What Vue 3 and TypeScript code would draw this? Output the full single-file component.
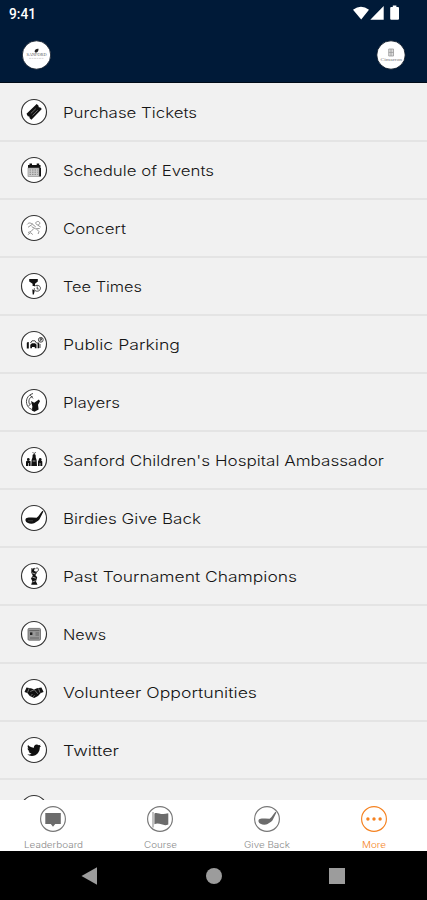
<script setup lang="ts">
interface MenuItem { label: string; icon: string; width: number }
interface Tab { label: string; icon: string; width: number; active?: boolean }

const items: MenuItem[] = [
  { label: 'Purchase Tickets', icon: 'ticket', width: 134 },
  { label: 'Schedule of Events', icon: 'calendar', width: 151 },
  { label: 'Concert', icon: 'concert', width: 63 },
  { label: 'Tee Times', icon: 'tee', width: 79 },
  { label: 'Public Parking', icon: 'parking', width: 117 },
  { label: 'Players', icon: 'players', width: 57 },
  { label: "Sanford Children's Hospital Ambassador", icon: 'children', width: 321 },
  { label: 'Birdies Give Back', icon: 'club', width: 138 },
  { label: 'Past Tournament Champions', icon: 'trophy', width: 234 },
  { label: 'News', icon: 'news', width: 43 },
  { label: 'Volunteer Opportunities', icon: 'hands', width: 194 },
  { label: 'Twitter', icon: 'twitter', width: 56 },
  { label: '', icon: 'none', width: 0 },
]

const tabs: Tab[] = [
  { label: 'Leaderboard', icon: 'board', width: 59 },
  { label: 'Course', icon: 'flag', width: 33 },
  { label: 'Give Back', icon: 'club', width: 46 },
  { label: 'More', icon: 'more', width: 24, active: true },
]

// Filled shapes, drawn on a 28-unit canvas centred on 14,14
const solid: Record<string, string> = {
  ticket: 'M6.5 15.8 16.7 6 18.4 7.6 18.8 9.2 20.4 9.6 21.8 11 11.4 21.7 9.7 20.2 9.3 18.6 7.8 18.2Z',
  calendar: 'M8 9H20.5V13H8ZM9.5 7.5H12V10H9.5ZM16.7 7.5H19.2V10H16.7ZM18.8 12H21V20.5H19Z',
  tee: 'M9.2 6.9H17.8V9.6L15 11.8V14H12.6V11.7L9.2 9.5ZM12.3 17.3 14.8 18.5 13.8 22.5H12.7Z',
  parking: 'M6.8 12.8H8.8V18.4H6.8ZM10.3 14.8 12 13.2H15L16.5 14.6V18.2H14.8V17H12V18.2H10.3ZM17.6 13H19.2V18.2H17.6Z',
  players: 'M11 13 14.2 14.8 18.9 11.4 20 13.2 18 16.7 18.6 21.5 14.5 23.7 11.8 22.6 12.4 18.5Z',
  children: 'M6 15.4 8 13.9 10.6 15.3V20H6ZM11.6 14 13 9.8H15.2L16.6 14 17 20H11.3ZM18 14.8 20.4 13.6 22.3 15.5V20H18Z',
  club: 'M5.9 14.4C7.4 13.2 10 13.4 12 13.5L16.6 13.7 18.3 12.2 22.4 6.8 23.4 7.5 20.3 13.8C19.4 16.4 17.2 17.2 14.6 18.9 12.8 20 9.5 19.9 7.5 18.8 5.4 17.6 5 15.8 5.9 14.4Z',
  trophy: 'M11.4 7 15 5.8 14 8.7 17 10.5 15.4 13.2 17.2 15.2 16 19.5 17.5 22.8H11.2L12.3 19 11 16.5 12.8 13.6 11.3 10.8Z',
  hands: 'M4.5 14 6.5 9.5 11.7 10.5 14 11.5 17 10.2 21.4 9.5 23.6 14 20.8 15 18 18 14.2 20 9.8 18 7.3 15Z',
  twitter: 'M8 9.1C9.8 11 12 11.6 14 11.8 13.6 9.8 15 8.5 16.7 8.5 17.6 8.5 18.3 8.8 18.8 9.3L20.6 8.7 19.7 10.1 21.1 9.9 19.8 11.3C20 15.5 17.1 20 11.9 20 10.1 20 8.5 19.5 7.2 18.6 9.1 18.7 10.5 18.2 11.6 17.4 9.9 17.3 9 16.4 8.6 15.3L9.7 15.2C8.3 14.8 7.6 13.7 7.6 12.3L8.7 12.6C7.6 11.8 7.3 10.3 8 9.1Z',
  board: 'M6.3 8H21.8V19H16.2L14 21.8 11.8 19H6.3Z',
  flag: 'M8.4 8.4C11.5 6.6 14 10.5 22.3 8.3V19.4C17.2 22 13.8 16.7 8.4 19.2Z',
}

// Thin secondary strokes
const line: Record<string, string> = {
  concert: 'M7.3 10.4C9 7.8 11 9.4 12.7 10M8 13.3 12.5 10.2 15.8 13M15.8 8.7C17 6.5 20.4 7.4 19.7 9.9 18.3 11.8 15.7 10.9 15.8 8.7M17.8 11.2 20.8 13.1M11.7 12.7 15.6 14.8 19.7 14.5M13.8 14.5 11 17.5 8 18.5M16.7 15.2 19 17.6 18.1 20M7.8 20.7 10.7 18.7 12.8 20.6',
  tee: 'M14.5 14.2C17.8 11.8 21.8 14.6 20 17.8 17.6 20.8 13.2 18.4 14.4 16.2M17.2 14.4V17H18.7',
  parking: 'M7 12.6H9M10.5 13 12 10.8H15L16.5 13H19M20 14V18M18.4 9.8A2.4 2.4 0 1 0 23.2 9.8A2.4 2.4 0 1 0 18.4 9.8M20.2 11.4V8.6H21.6V10H20.5',
  players: 'M13 5.5C7.2 7.2 5.2 12.5 7.2 17.2 8.3 19.8 10.7 21.2 13 21.8M12.5 8.5C8.8 9.5 8.2 13.5 9.6 16.3M10.3 7.2 13 10.4M8.6 18 11.3 15.2',
  children: 'M12.7 6.2 14 7.6 15.8 6.4',
  trophy: 'M15.5 6.7C18.5 4.4 19.4 8.2 17.3 9.7L15 10.3M11.4 6.2 13 8',
  flag: 'M7 7V22.5',
}
</script>

<template>
  <main class="screen">
    <header class="header">
      <div class="status">
        <svg class="clock" width="40" height="18"><text x="0" y="14" textLength="27" lengthAdjust="spacingAndGlyphs">9:41</text></svg>
        <svg class="signals" width="50" height="18" viewBox="0 0 50 18">
          <path d="M0 4.7Q8-1.4 16 4.7L8.2 14.6ZM17.3 14.8 30.7 1V14.8ZM37.2 3Q37.2 2 38.2 2H39.8V.6H43.4V2H45Q46 2 46 3V13.8Q46 14.8 45 14.8H38.2Q37.2 14.8 37.2 13.8Z" />
        </svg>
      </div>
      <div class="brands">
        <svg width="30" height="30" viewBox="0 0 30 30">
          <circle cx="15.5" cy="15" r="14.2" class="brand-disc" />
          <path d="M13.5 11.6Q13.9 8.4 17.5 8.7 17.7 12 14.7 12.7Z" fill="#222" />
          <text x="5.5" y="16.2" textLength="20" lengthAdjust="spacingAndGlyphs" class="brand-one">SANFORD</text>
          <path d="M8 18.4H23" stroke="#ccc" stroke-width=".7" stroke-dasharray="2 .5" />
        </svg>
        <svg width="30" height="30" viewBox="0 0 30 30">
          <circle cx="15" cy="15" r="14.2" class="brand-disc" />
          <path d="M12.7 9H17.5V16H12.7ZM15 9V16M12.7 12.4H17.5" fill="#ddd" stroke="#999" stroke-width=".8" />
          <text x="4.5" y="20.5" textLength="21.5" lengthAdjust="spacingAndGlyphs" class="brand-two">Cimarron</text>
        </svg>
      </div>
    </header>

    <ul class="menu">
      <li v-for="(item, i) in items" :key="i" class="row">
        <svg class="icon" width="28" height="28" viewBox="0 0 28 28">
          <circle cx="14" cy="14" r="12.5" class="ring" />
          <path v-if="solid[item.icon]" :d="solid[item.icon]" />
          <path v-if="line[item.icon]" :d="line[item.icon]" class="thin" :class="{ faint: item.icon === 'concert' }" />
          <g v-if="item.icon === 'ticket'" class="cut"><path d="M10.8 15.5 15.8 10.7M12.5 17.4 17.7 12.3" opacity=".6" /></g>
          <g v-if="item.icon === 'calendar'">
            <rect x="8" y="12" width="11" height="8.5" fill="#ccc" stroke="#888" stroke-width=".6" />
            <path d="M9.5 14H17.8M9.5 16.2H17.8M9.5 18.4H17.8" stroke="#888" stroke-width="1" stroke-dasharray="1.5 1" />
          </g>
          <g v-if="item.icon === 'children'"><circle cx="8.3" cy="13.2" r="1.3" /><circle cx="14.1" cy="9.7" r="1.6" /><circle cx="20.2" cy="13.2" r="1.3" /><path class="cut" d="M12.7 15H15.5M8.5 17V20M20 17V20" /></g>
          <g v-if="item.icon === 'club'" class="cut"><path d="M8 16.8H13" opacity=".3" /></g>
          <g v-if="item.icon === 'trophy'" class="cut"><path d="M12 10.8 15.5 12M12.3 15 15.8 16.2M12.4 20 15.7 18.8" /></g>
          <g v-if="item.icon === 'hands'" class="cut"><path d="M7.5 14.5 9.2 10.2M20 14.6 18.5 10.4M10.2 13.5 14.3 11.7 17.8 15.8M11 17.7 12.4 16M13.3 18.8 14.5 17.3" opacity=".65" /></g>
          <g v-if="item.icon === 'news'">
            <rect x="8" y="8.4" width="12.5" height="11.8" rx="1" fill="#999" stroke="#666" stroke-width=".8" />
            <path d="M9.3 10.6H19.4M15.5 13H19M15.5 15H19M10 18H19" stroke="#555" stroke-width=".8" />
            <path d="M10 12.4H12.4V15H10Z" fill="#222" />
          </g>
        </svg>
        <svg v-if="item.label" class="label" :width="item.width + 4" height="24">
          <text x="0" y="17.5" :textLength="item.width" lengthAdjust="spacingAndGlyphs">{{ item.label }}</text>
        </svg>
      </li>
    </ul>

    <nav class="tabs">
      <div v-for="tab in tabs" :key="tab.label" class="tab" :class="{ active: tab.active }">
        <svg width="28" height="28" viewBox="0 0 28 28">
          <circle cx="14" cy="14" r="12.4" class="ring" />
          <path v-if="solid[tab.icon]" :d="solid[tab.icon]" />
          <path v-if="line[tab.icon]" :d="line[tab.icon]" class="thin" />
          <g v-if="tab.icon === 'more'"><circle cx="7.9" cy="14" r="1.7" /><circle cx="14" cy="14" r="1.7" /><circle cx="20.1" cy="14" r="1.7" /></g>
        </svg>
        <svg class="tab-label" :width="tab.width" height="14">
          <text x="0" y="10" :textLength="tab.width" lengthAdjust="spacingAndGlyphs">{{ tab.label }}</text>
        </svg>
      </div>
    </nav>

    <footer class="system">
      <svg width="18" height="20" viewBox="0 0 18 20"><path d="M-.5 10 15 1.2V18.8Z" /></svg>
      <svg width="18" height="18" viewBox="0 0 18 18"><circle cx="9" cy="9" r="8" /></svg>
      <svg width="18" height="18" viewBox="0 0 18 18"><path d="M1 1H17V17H1Z" /></svg>
    </footer>
  </main>
</template>

<style>
body { margin: 0; }
</style>

<style scoped>
.screen {
  width: 427px;
  height: 900px;
  display: flex;
  flex-direction: column;
  overflow: hidden;
  background: #f1f1f1;
  font-family: Inter, "Open Sans", sans-serif;
}
svg { display: block; flex: none; overflow: visible; }
.header {
  flex: none;
  height: 83px;
  box-sizing: border-box;
  background: #001a38;
  border-bottom: 1px solid #000b18;
}
.status {
  height: 40px;
  box-sizing: border-box;
  padding: 5px 24px 0 9px;
  display: flex;
  justify-content: space-between;
}
.clock text { font: 500 14px Roboto, sans-serif; fill: #fff; }
.signals { fill: #fff; }
.brands { display: flex; justify-content: space-between; padding: 0 21px; }
.brand-disc { fill: #fff; stroke: #000c1c; stroke-width: .8; }
.brand-one { font: 3.5px "Liberation Serif", serif; fill: #555; }
.brand-two { font: 4.8px "Liberation Serif", serif; fill: #777; }
.menu {
  flex: 1;
  min-height: 0;
  overflow: hidden;
  list-style: none;
  margin: 0;
  padding: 1px 0 0;
}
.row {
  height: 58px;
  box-sizing: border-box;
  display: flex;
  align-items: center;
  gap: 15px;
  padding-left: 20px;
  border-bottom: 2px solid #e4e4e4;
}
.icon { fill: #111; }
.ring { fill: #fff; stroke: #333; stroke-width: 1.15; }
.thin { fill: none; stroke: #333; stroke-width: .9; }
.faint { stroke: #888; }
.cut { fill: none; stroke: #ccc; stroke-width: .8; }
.label text { font-size: 14.5px; font-weight: 300; fill: #151515; }
.tabs {
  flex: none;
  height: 51px;
  display: grid;
  grid-template-columns: repeat(4, 1fr);
  background: #fff;
}
.tab {
  display: flex;
  flex-direction: column;
  align-items: center;
  padding-top: 5px;
  gap: 5px;
  fill: #6c6c6c;
}
.tab .ring { stroke: #777; }
.tab .thin { stroke: #777; }
.tab.active { fill: #f58220; }
.tab.active .ring { stroke: #f58220; }
.tab-label text { font-size: 9px; fill: #888; font-weight: 300; }
.active .tab-label text { fill: #f58220; }
.system {
  flex: none;
  height: 49px;
  background: #000;
  display: flex;
  align-items: center;
  justify-content: space-between;
  box-sizing: border-box;
  padding: 0 81px 0 82px;
  fill: #9c9c9c;
}
</style>
